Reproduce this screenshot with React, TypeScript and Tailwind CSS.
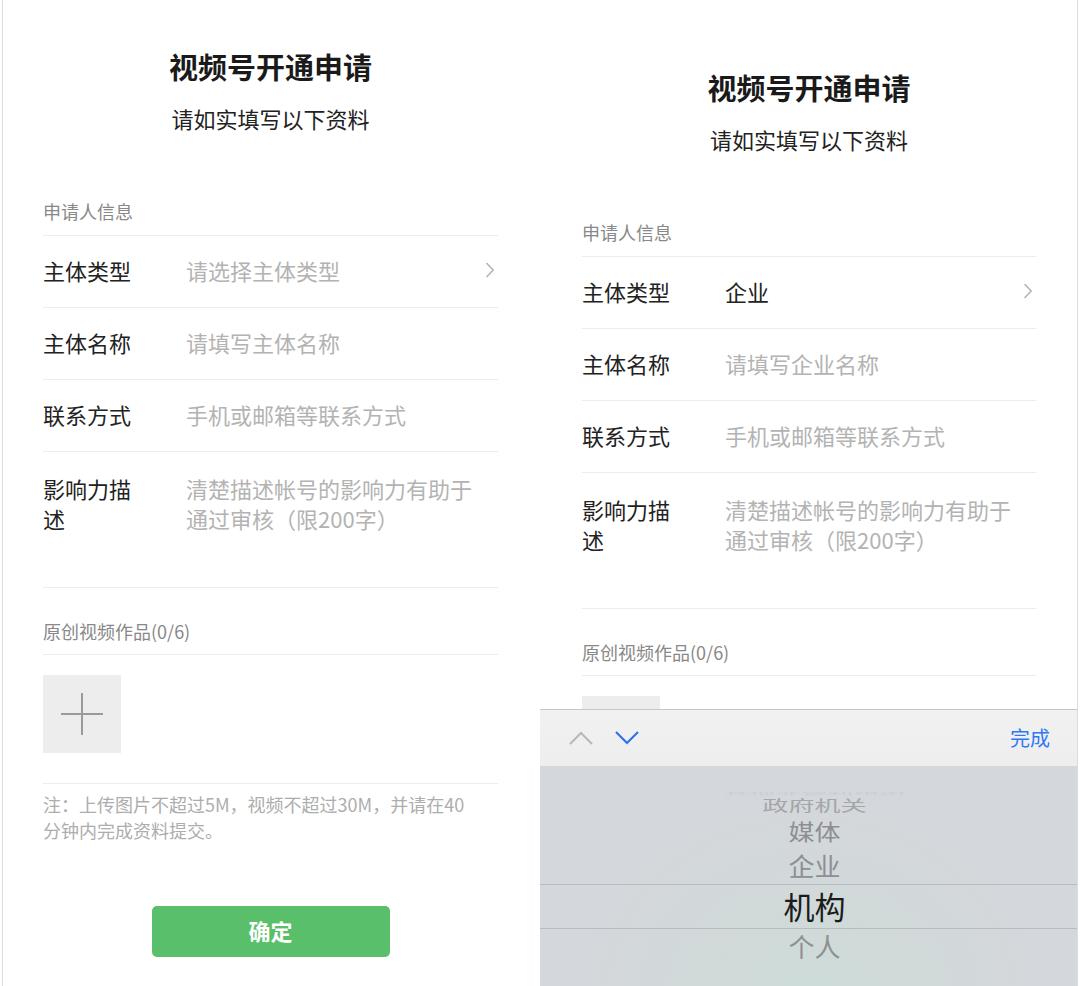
import type { ReactNode } from "react";

function ChevronRight() {
  return (
    <svg width="10" height="16" viewBox="0 0 10 16" className="ml-auto mr-[3px] shrink-0">
      <path d="M2 1.5 L8.2 8 L2 14.5" fill="none" stroke="#b4b4b4" strokeWidth="1.6" strokeLinecap="round" strokeLinejoin="round" />
    </svg>
  );
}

function FormRow({ label, children, arrow }: { label: string; children: ReactNode; arrow?: boolean }) {
  return (
    <div className="flex h-[72px] items-center border-b border-[#ececec] pb-[3px]">
      <div className="w-[96px] shrink-0 text-[22px] leading-[30px] text-[#222]">{label}</div>
      <div className="ml-[47px] text-[22px] leading-[30px]">{children}</div>
      {arrow && <ChevronRight />}
    </div>
  );
}

function ApplyForm({ filled }: { filled?: boolean }) {
  return (
    <>
      {/* Heading */}
      <div className="text-center">
        <h1 className="text-[29px] leading-[40px] font-semibold text-[#1a1a1a]">视频号开通申请</h1>
        <p className="mt-[17px] text-[22px] leading-[30px] text-[#222]">请如实填写以下资料</p>
      </div>

      {/* Applicant info */}
      <div className="mt-[66px] border-b border-[#ececec] pb-[12px] text-[18px] leading-[24px] text-[#888]">申请人信息</div>
      <FormRow label="主体类型" arrow>
        {filled ? <span className="text-[#222]">企业</span> : <span className="text-[#b3b3b3]">请选择主体类型</span>}
      </FormRow>
      <FormRow label="主体名称">
        <span className="text-[#b3b3b3]">{filled ? "请填写企业名称" : "请填写主体名称"}</span>
      </FormRow>
      <FormRow label="联系方式">
        <span className="text-[#b3b3b3]">手机或邮箱等联系方式</span>
      </FormRow>
      <div className="flex h-[136px] items-start border-b border-[#ececec] pt-[21px]">
        <div className="w-[96px] shrink-0 text-[22px] leading-[30px] text-[#222]">影响力描述</div>
        <div className="ml-[47px] w-[290px] text-[22px] leading-[30px] text-[#b3b3b3]">清楚描述帐号的影响力有助于通过审核（限200字）</div>
      </div>

      {/* Videos */}
      <div className="mt-[31px] border-b border-[#ececec] pb-[11px] text-[18px] leading-[24px] text-[#888]">原创视频作品(0/6)</div>
      <div className="border-b border-[#ececec] pt-[20px] pb-[30px]">
        <div className="flex h-[78px] w-[78px] items-center justify-center bg-[#ededed]">
          <svg width="42" height="42" viewBox="0 0 42 42">
            <path d="M21 0 V42 M0 21 H42" stroke="#9a9a9a" strokeWidth="2" />
          </svg>
        </div>
      </div>

      <p className="mt-[7px] text-[18px] leading-[26px] text-[#adadad]">
        注：上传图片不超过5M，视频不超过30M，并请在40
        <br />
        分钟内完成资料提交。
      </p>

      <div className="mt-[63px] flex justify-center">
        <button className="h-[51px] w-[238px] rounded-[5px] bg-[#59bf6b] pb-[2px] text-[22px] font-semibold text-white">确定</button>
      </div>
    </>
  );
}

function PickerSheet() {
  return (
    <div className="absolute left-0 right-0 top-[709px] bottom-0 flex flex-col">
      {/* Toolbar */}
      <div className="flex h-[57px] shrink-0 items-center border-t border-[#c6c6c6] bg-gradient-to-b from-[#f1f1f1] to-[#eeeeee] pl-[29px] pr-[27px]">
        <svg width="24" height="14" viewBox="0 0 24 14">
          <path d="M1 13 L12 2 L23 13" fill="none" stroke="#b8b8b8" strokeWidth="2" />
        </svg>
        <svg width="24" height="14" viewBox="0 0 24 14" className="ml-[22px]">
          <path d="M1 1 L12 12 L23 1" fill="none" stroke="#2f72ee" strokeWidth="2.2" />
        </svg>
        <span className="ml-auto text-[20px] leading-[28px] text-[#2f78f4]">完成</span>
      </div>

      {/* Wheel */}
      <div className="flex-1 bg-[radial-gradient(ellipse_at_50%_105%,#cddcd8_0%,#d1d9d9_30%,#d4d7db_60%)] pt-[21px] text-center">
        <div className="h-[12px] pl-[12px] text-[26px] leading-[12px] text-[#bfc1c5] scale-y-[0.15] opacity-40">其他非营利组织</div>
        <div className="h-[12px] pl-[12px] text-[26px] leading-[12px] text-[#a4a6aa] scale-y-[0.58]">政府机关</div>
        <div className="h-[40px] pl-[12px] text-[26px] leading-[40px] text-[#8d8e92] scale-y-[0.82]">媒体</div>
        <div className="h-[30px] pl-[12px] text-[26px] leading-[30px] text-[#8e8f92] scale-y-[0.95]">企业</div>
        <div className="mt-[3px] h-[45px] border-y border-[#b8bbc0] pl-[12px] text-[31px] leading-[41px] text-[#1c1c1c]">机构</div>
        <div className="h-[36px] pl-[12px] text-[26px] leading-[34px] text-[#8e9092]">个人</div>
      </div>
    </div>
  );
}

export default function App() {
  return (
    <div className="flex h-[986px] w-[1080px] overflow-hidden bg-white font-['Noto_Sans_CJK_SC',sans-serif]">
      {/* Left screenshot */}
      <div className="h-full w-[540px] shrink-0 pl-[2px]">
        <div className="h-full border-l border-[#dcdcdc] pt-[46px] pl-[40px] pr-[42px]">
          <ApplyForm />
        </div>
      </div>

      {/* Right screenshot */}
      <div className="relative h-full w-[538px] shrink-0 border-r border-[#dcdcdc] pt-[67px] pl-[42px] pr-[41px]">
        <ApplyForm filled />
        <PickerSheet />
      </div>
    </div>
  );
}
